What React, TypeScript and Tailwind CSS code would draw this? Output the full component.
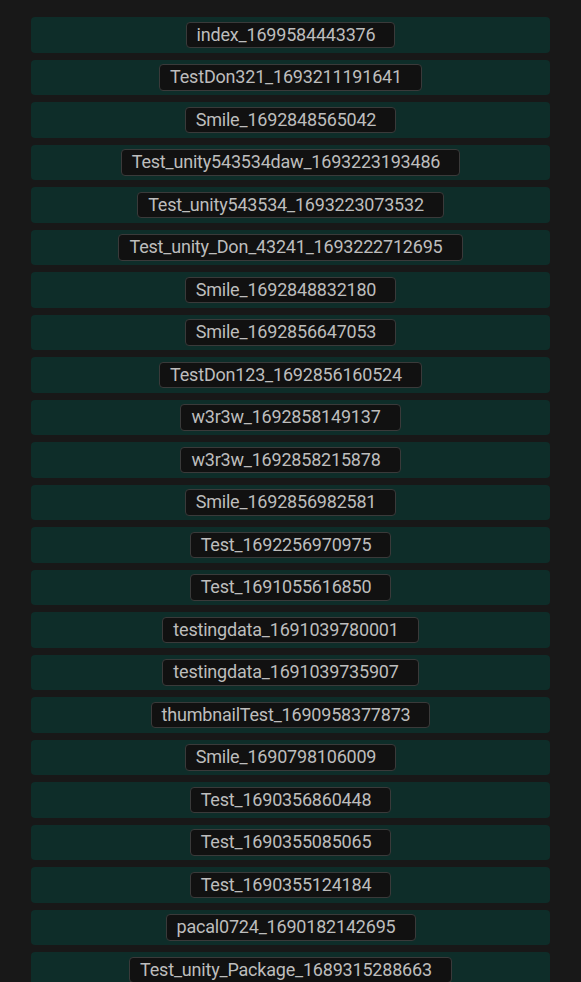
import React from 'react';

const items: string[] = [
  'index_1699584443376',
  'TestDon321_1693211191641',
  'Smile_1692848565042',
  'Test_unity543534daw_1693223193486',
  'Test_unity543534_1693223073532',
  'Test_unity_Don_43241_1693222712695',
  'Smile_1692848832180',
  'Smile_1692856647053',
  'TestDon123_1692856160524',
  'w3r3w_1692858149137',
  'w3r3w_1692858215878',
  'Smile_1692856982581',
  'Test_1692256970975',
  'Test_1691055616850',
  'testingdata_1691039780001',
  'testingdata_1691039735907',
  'thumbnailTest_1690958377873',
  'Smile_1690798106009',
  'Test_1690356860448',
  'Test_1690355085065',
  'Test_1690355124184',
  'pacal0724_1690182142695',
  'Test_unity_Package_1689315288663',
];

const App: React.FC = () => {
  return (
    <div className="min-h-screen bg-[#181818] px-[31px] pt-[17px] font-['Roboto',sans-serif]">
      <div className="flex flex-col gap-[7px]">
        {items.map((name, index) => (
          <div
            key={index}
            className="flex h-[35.5px] items-center justify-center rounded-[4px] bg-[#0e2d29]"
          >
            <div className="flex h-[26.5px] items-center rounded-[4px] border border-[#3a3a3a] bg-[#111111] pl-[10px] pr-[19px] text-[18px] leading-none tracking-[-0.2px] text-[#bdbdbd]">
              {name}
            </div>
          </div>
        ))}
      </div>
    </div>
  );
};

export default App;
